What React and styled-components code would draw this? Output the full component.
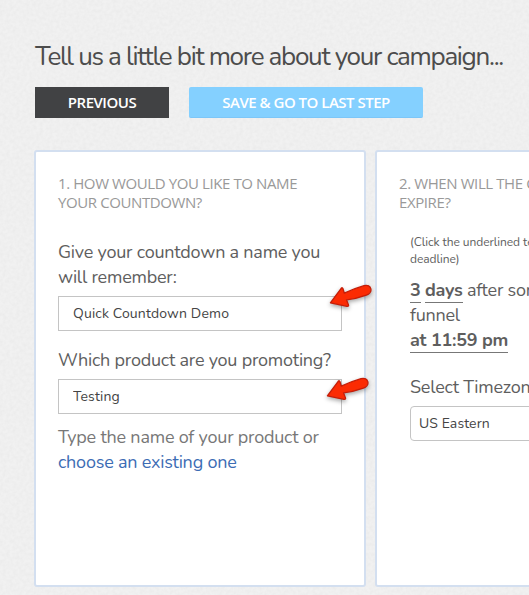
import React from 'react';
import styled, { createGlobalStyle } from 'styled-components';

const grain = `url("data:image/svg+xml,%3Csvg xmlns='http://www.w3.org/2000/svg' width='200' height='200'%3E%3Cfilter id='n'%3E%3CfeTurbulence type='fractalNoise' baseFrequency='.3' numOctaves='2' stitchTiles='stitch'/%3E%3CfeColorMatrix values='0 0 0 0 0 0 0 0 0 0 0 0 0 0 0 .04 0 0 0 -.012'/%3E%3C/filter%3E%3Crect width='200' height='200' filter='url(%23n)'/%3E%3C/svg%3E")`;

const Arrow = ({ left, top }) => (
    <ArrowSvg $left={left} $top={top} width='52' height='34' viewBox='0 0 52 34'>
        <path
            d='M4.4 20.8 L15.2 6.3 Q16.4 5 17 6.8 L18.3 11.2 Q28 6.6 38 3.7 C45.5 1.6 47.8 10.2 40.3 13.2 Q30 17 20.5 17.8 L22.5 23 Q22.8 24.6 21 24.3 Z'
            fill='#fb2b03'
            stroke='#c51d08'
            strokeWidth='1.3'
            strokeLinejoin='round'
        />
    </ArrowSvg>
);

const App = () => {
    return (
        <Wrapper>
            <GlobalStyle />
            <Title>Tell us a little bit more about your campaign...</Title>
            <ButtonRow>
                <DarkButton>PREVIOUS</DarkButton>
                <BlueButton>SAVE &amp; GO TO LAST STEP</BlueButton>
            </ButtonRow>
            <CardRow>
                <Card>
                    <CardTitle>1. HOW WOULD YOU LIKE TO NAME<br />YOUR COUNTDOWN?</CardTitle>
                    <Label><Line>Give your countdown a name you</Line><Line>will remember:</Line></Label>
                    <Field>
                        <Input type='text' defaultValue='Quick Countdown Demo' />
                        <Arrow left={267.5} top={-14} />
                    </Field>
                    <Label $top={17}><Line>Which product are you promoting?</Line></Label>
                    <Field>
                        <Input type='text' defaultValue='Testing' />
                        <Arrow left={264.5} top={-4} />
                    </Field>
                    <Hint>
                        <Line>Type the name of your product or</Line>
                        <Line><Link>choose an existing one</Link></Line>
                    </Hint>
                </Card>
                <Card>
                    <CardTitle>2. WHEN WILL THE COUNTDOWN<br />EXPIRE?</CardTitle>
                    <Deadline>
                        <Note>(Click the underlined text to edit<br />deadline)</Note>
                        <Rule>
                            <Line><Editable>3</Editable> <Editable>days</Editable> after someone enters</Line>
                            <Line>funnel</Line>
                            <Line><Editable>at 11:59 pm</Editable></Line>
                        </Rule>
                        <Label $top={22}><Line>Select Timezone:</Line></Label>
                        <Select>US Eastern</Select>
                    </Deadline>
                </Card>
            </CardRow>
        </Wrapper>
    )
}

const GlobalStyle = createGlobalStyle`
    * {box-sizing: border-box;}
    body {
        margin: 0;
        overflow: hidden;
        font-family: Nunito, Lato, sans-serif;
    }
`;
const Wrapper = styled.div`
    width: 529px;
    height: 595px;
    padding: 39px 0 0 35px;
    overflow: hidden;
    color: #5e5e5e;
    background: #f1f1f1 ${grain};
`;
const Title = styled.h1`
    margin: 0;
    height: 36px;
    line-height: 36px;
    font-size: 26px;
    font-weight: 400;
    letter-spacing: -1.29px;
    white-space: nowrap;
    color: #4c4c4c;
`;
const ButtonRow = styled.div`
    display: flex;
    gap: 20px;
    margin-top: 12px;
`;
const DarkButton = styled.button`
    width: 134px;
    height: 31px;
    padding: 0 0 1px;
    border: none;
    background-color: #414244;
    color: #fff;
    font-family: 'Open Sans', sans-serif;
    font-size: 15px;
    font-weight: 600;
    letter-spacing: -0.5px;
    white-space: nowrap;
    cursor: pointer;
`;
const BlueButton = styled(DarkButton)`
    width: 234px;
    padding: 0;
    border-radius: 2px;
    border-bottom: 1px solid #7cc6f8;
    background-color: #84d0ff;
`;
const CardRow = styled.div`
    display: flex;
    gap: 9px;
    margin: 32px 0 0 -1px;
`;
const Card = styled.section`
    flex: none;
    width: 332px;
    height: 437px;
    padding: 22px 22px 0;
    border: 2px solid #d3dff0;
    border-radius: 3px;
    background-color: #fff;
`;
const CardTitle = styled.h2`
    margin: 0 0 28px;
    font-family: 'Open Sans', sans-serif;
    font-size: 15px;
    font-weight: 400;
    line-height: 19px;
    letter-spacing: -0.4px;
    white-space: nowrap;
    color: #999;
`;
const Label = styled.div`
    margin-top: ${({ $top }) => $top || 0}px;
    font-size: 18px;
    line-height: 25px;
    letter-spacing: -0.22px;
`;
const Line = styled.div`
    white-space: nowrap;
`;
const Field = styled.div`
    position: relative;
    margin-top: 6px;
    height: 35px;
`;
const Input = styled.input`
    width: 284px;
    height: 35px;
    padding: 0 14px;
    border: 1px solid #c4c4c4;
    border-radius: 0;
    outline: none;
    background-color: #fff;
    color: #444;
    font-family: inherit;
    font-size: 14px;
    letter-spacing: 0.15px;
`;
const ArrowSvg = styled.svg`
    position: absolute;
    left: ${({ $left }) => $left}px;
    top: ${({ $top }) => $top}px;
    filter: drop-shadow(0 2px 2px rgba(0, 0, 0, 0.35));
    pointer-events: none;
`;
const Hint = styled(Label)`
    margin-top: 11px;
    color: #777;
`;
const Link = styled.a`
    color: #3c6cb4;
    cursor: pointer;
`;
const Deadline = styled.div`
    padding-left: 11px;
`;
const Note = styled.p`
    margin: -6px 0 0;
    font-size: 12px;
    line-height: 17px;
    letter-spacing: -0.05px;
    white-space: nowrap;
`;
const Rule = styled.div`
    margin-top: 10px;
    font-size: 18px;
    line-height: 25px;
    letter-spacing: -0.25px;
`;
const Editable = styled.b`
    display: inline-block;
    height: 25px;
    border-bottom: 1px solid #777;
    vertical-align: top;
    cursor: pointer;
`;
const Select = styled.div`
    width: 250px;
    height: 35px;
    margin-top: 6px;
    padding-left: 8px;
    border: 1px solid #c4c4c4;
    border-radius: 4px;
    font-size: 14px;
    line-height: 33px;
    letter-spacing: 0.1px;
    color: #444;
`;

export default App;
